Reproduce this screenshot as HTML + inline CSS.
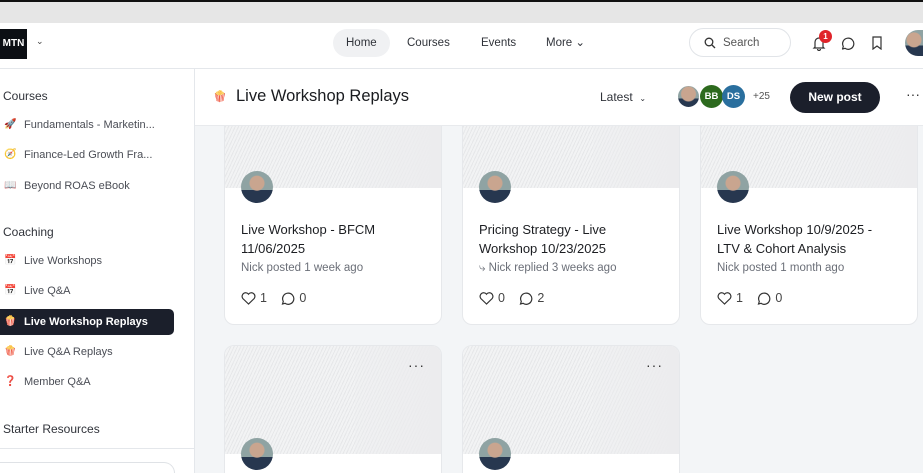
<!DOCTYPE html>
<html><head><meta charset="utf-8"><style>
*{box-sizing:border-box;margin:0;padding:0}
html,body{width:923px;height:473px;overflow:hidden}
body{font-family:"Liberation Sans",sans-serif;background:#fff;position:relative;color:#191b1f}
.topline{position:absolute;left:0;top:0;width:923px;height:2px;background:#111}
.band{position:absolute;left:0;top:2px;width:923px;height:21px;background:#e6e6e6}
.hdr{position:absolute;left:0;top:23px;width:923px;height:46px;background:#fff;border-bottom:1px solid #e4e7eb;z-index:5}
.logo{position:absolute;left:0;top:6px;width:27px;height:30px;background:#0c0f14;color:#fff;font-weight:bold;font-size:10px;line-height:30px;text-align:center}
.nav{position:absolute;top:6px;font-size:11.5px;color:#30333a;height:28px;line-height:28px;padding:0 13px;border-radius:14px}
.search{position:absolute;left:689px;top:5px;width:102px;height:29px;border:1px solid #e1e4e8;border-radius:15px;font-size:11.5px;color:#555;line-height:29px;padding-left:33px}
.side{position:absolute;left:0;top:69px;width:195px;height:404px;border-right:1px solid #e4e7eb;background:#fff;overflow:hidden}
.sh{position:absolute;left:3px;font-size:12px;color:#30333a}
.si{position:absolute;left:0;width:174px;height:26px;font-size:11px;color:#4a4d55;line-height:26px;padding-left:24px}
.si i{position:absolute;left:4px;font-style:normal;font-size:10px}
.si.act{background:#1b1f2b;color:#fff;font-weight:bold;border-radius:0 5px 5px 0}
.main{position:absolute;left:195px;top:69px;width:728px;height:404px;background:#f3f5f7;overflow:hidden}
.th{position:absolute;left:0;top:0;width:728px;height:57px;background:#fff;border-bottom:1px solid #e8eaed;z-index:3}
.card{position:absolute;width:218px;background:#fff;border:1px solid #e6e8eb;border-radius:10px;overflow:hidden}
.img{position:absolute;left:0;top:0;width:100%;background:repeating-linear-gradient(115deg,#f2f3f4 0 2px,#e6e7e9 2px 3px)}
.img:after{content:"";position:absolute;right:0;top:0;width:40%;height:100%;background:linear-gradient(90deg,rgba(236,237,239,.3),#ececee)}
.av{position:absolute;width:32px;height:32px;border-radius:50%;background:radial-gradient(circle at 50% 38%,#c9a58f 0 7px,transparent 8px),linear-gradient(#8fa3a3 60%,#27374f 60%)}
.t{position:absolute;left:16px;font-size:13px;line-height:19px;color:#1c1e22}
.m{position:absolute;left:16px;font-size:11.5px;color:#6b6f78}
.r{position:absolute;left:16px;font-size:12.5px;color:#444;display:flex;align-items:center;gap:4px}
.dots{position:absolute;right:16px;font-size:14px;color:#333;letter-spacing:1px}
</style></head><body>
<div class="topline"></div><div class="band"></div>
<div class="hdr">
<div class="logo">MTN</div>
<div style="position:absolute;left:36px;top:13px;font-size:9px;color:#444">&#8964;</div>
<div class="nav" style="left:333px;background:#f0f1f3">Home</div>
<div class="nav" style="left:394px">Courses</div>
<div class="nav" style="left:468px">Events</div>
<div class="nav" style="left:533px">More &#8964;</div>
<div class="search"><svg style="position:absolute;left:14px;top:8px" width="12" height="12" viewBox="0 0 12 12"><circle cx="5" cy="5" r="3.8" fill="none" stroke="#333" stroke-width="1.3"/><path d="M8 8l3 3" stroke="#333" stroke-width="1.3"/></svg>Search</div>
<svg style="position:absolute;left:812px;top:13px" width="14" height="15" viewBox="0 0 14 15"><path d="M3 11V6a4 4 0 018 0v5l1 1H2z M5.5 13a1.5 1.5 0 003 0" fill="none" stroke="#333" stroke-width="1.2"/></svg>
<div style="position:absolute;left:819px;top:7px;width:13px;height:13px;border-radius:50%;background:#e0242a;color:#fff;font-size:8px;text-align:center;line-height:13px;font-weight:bold">1</div>
<svg style="position:absolute;left:841px;top:13px" width="14" height="14" viewBox="0 0 14 14"><path d="M4 12.3L1.5 13l.8-2.6A5.6 5.6 0 1 1 4 12.3z" fill="none" stroke="#333" stroke-width="1.2" stroke-linejoin="round"/></svg>
<svg style="position:absolute;left:871px;top:13px" width="12" height="14" viewBox="0 0 12 14"><path d="M2 1h8v12l-4-3-4 3z" fill="none" stroke="#333" stroke-width="1.2"/></svg>
<div class="av" style="left:905px;top:7px;width:18px;height:26px;border-radius:13px 0 0 13px"></div>
</div>
<div class="side">
<div class="sh" style="top:20px">Courses</div>
<div class="si" style="top:43px"><i>🚀</i>Fundamentals - Marketin...</div>
<div class="si" style="top:73px"><i>🧭</i>Finance-Led Growth Fra...</div>
<div class="si" style="top:104px"><i>📖</i>Beyond ROAS eBook</div>
<div class="sh" style="top:156px">Coaching</div>
<div class="si" style="top:179px"><i>📅</i>Live Workshops</div>
<div class="si" style="top:209px"><i>📅</i>Live Q&amp;A</div>
<div class="si act" style="top:240px"><i>🍿</i>Live Workshop Replays</div>
<div class="si" style="top:270px"><i>🍿</i>Live Q&amp;A Replays</div>
<div class="si" style="top:300px"><i style="color:#d22">❓</i>Member Q&amp;A</div>
<div class="sh" style="top:353px">Starter Resources</div>
<div style="position:absolute;left:0;top:379px;width:194px;border-top:1px solid #e4e7eb"></div>
<div style="position:absolute;left:-10px;top:393px;width:185px;height:11px;border:1px solid #dfe2e6;border-bottom:none;border-radius:15px 15px 0 0"></div>
</div>
<div class="main">
<div class="th">
<div style="position:absolute;left:18px;top:21px;font-size:11px">🍿</div>
<div style="position:absolute;left:41px;top:18px;font-size:16.5px;color:#191b1f">Live Workshop Replays</div>
<div style="position:absolute;left:405px;top:21px;font-size:12px;color:#30333a">Latest &nbsp;<span style="font-size:8px">&#8964;</span></div>
<div class="av" style="left:482px;top:16px;width:23px;height:23px;border:1px solid #fff"></div>
<div style="position:absolute;left:505px;top:16px;width:23px;height:23px;border-radius:50%;background:#2d6a1e;color:#fff;font-size:9.5px;font-weight:bold;text-align:center;line-height:23px">BB</div>
<div style="position:absolute;left:527px;top:16px;width:23px;height:23px;border-radius:50%;background:#2a6f9e;color:#fff;font-size:9.5px;font-weight:bold;text-align:center;line-height:23px">DS</div>
<div style="position:absolute;left:558px;top:22px;font-size:10px;color:#555">+25</div>
<div style="position:absolute;left:595px;top:13px;width:90px;height:31px;border-radius:16px;background:#1b1f2b;color:#fff;font-weight:bold;font-size:12px;text-align:center;line-height:31px">New post</div>
<div style="position:absolute;left:711px;top:17px;font-size:14px;color:#333">···</div>
</div>
<div class="card" style="left:29px;top:30px;height:226px"><div class="img" style="height:88px"></div><div class="av" style="left:16px;top:71px"></div><div class="t" style="top:120px">Live Workshop - BFCM<br>11/06/2025</div><div class="m" style="top:162px">Nick posted 1 week ago</div><div class="r" style="top:191px"><svg width="15" height="13" viewBox="0 0 15 13"><path d="M7.5 12L1.8 6.5A3.3 3.3 0 017.5 2.2a3.3 3.3 0 015.7 4.3z" fill="none" stroke="#333" stroke-width="1.2"/></svg>1 &nbsp;&nbsp;<svg width="14" height="14" viewBox="0 0 14 14"><path d="M4 12.3L1.5 13l.8-2.6A5.6 5.6 0 1 1 4 12.3z" fill="none" stroke="#333" stroke-width="1.2"/></svg>0</div></div>
<div class="card" style="left:267px;top:30px;height:226px"><div class="img" style="height:88px"></div><div class="av" style="left:16px;top:71px"></div><div class="t" style="top:120px">Pricing Strategy - Live<br>Workshop 10/23/2025</div><div class="m" style="top:162px">⤷ Nick replied 3 weeks ago</div><div class="r" style="top:191px"><svg width="15" height="13" viewBox="0 0 15 13"><path d="M7.5 12L1.8 6.5A3.3 3.3 0 017.5 2.2a3.3 3.3 0 015.7 4.3z" fill="none" stroke="#333" stroke-width="1.2"/></svg>0 &nbsp;&nbsp;<svg width="14" height="14" viewBox="0 0 14 14"><path d="M4 12.3L1.5 13l.8-2.6A5.6 5.6 0 1 1 4 12.3z" fill="none" stroke="#333" stroke-width="1.2"/></svg>2</div></div>
<div class="card" style="left:505px;top:30px;height:226px"><div class="img" style="height:88px"></div><div class="av" style="left:16px;top:71px"></div><div class="t" style="top:120px">Live Workshop 10/9/2025 -<br>LTV &amp; Cohort Analysis</div><div class="m" style="top:162px">Nick posted 1 month ago</div><div class="r" style="top:191px"><svg width="15" height="13" viewBox="0 0 15 13"><path d="M7.5 12L1.8 6.5A3.3 3.3 0 017.5 2.2a3.3 3.3 0 015.7 4.3z" fill="none" stroke="#333" stroke-width="1.2"/></svg>1 &nbsp;&nbsp;<svg width="14" height="14" viewBox="0 0 14 14"><path d="M4 12.3L1.5 13l.8-2.6A5.6 5.6 0 1 1 4 12.3z" fill="none" stroke="#333" stroke-width="1.2"/></svg>0</div></div>
<div class="card" style="left:29px;top:276px;height:128px;border-bottom:none;border-radius:10px 10px 0 0"><div class="img" style="height:108px"></div><div class="dots" style="top:11px">···</div><div class="av" style="left:16px;top:92px"></div></div>
<div class="card" style="left:267px;top:276px;height:128px;border-bottom:none;border-radius:10px 10px 0 0"><div class="img" style="height:108px"></div><div class="dots" style="top:11px">···</div><div class="av" style="left:16px;top:92px"></div></div>
</div>
</body></html>
